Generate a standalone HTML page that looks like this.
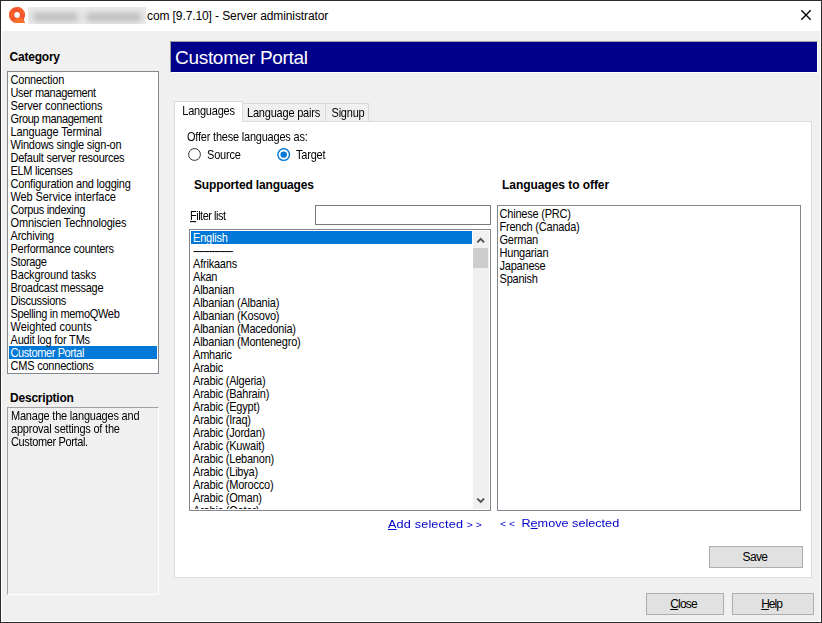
<!DOCTYPE html>
<html>
<head>
<meta charset="utf-8">
<title>Server administrator</title>
<style>
html,body{margin:0;padding:0;}
body{width:822px;height:623px;overflow:hidden;background:#2b2b2b;font-family:"Liberation Sans",sans-serif;font-size:11px;letter-spacing:-0.21px;color:#000;position:relative;}
.abs{position:absolute;}
#frame{left:1px;top:1px;width:820px;height:621px;background:#fff;}
#client{left:2px;top:31px;width:818px;height:590px;background:#f0f0f0;}
#title{left:147px;top:8px;font-size:12px;line-height:16px;white-space:nowrap;color:#000;letter-spacing:-0.1px;}
#blur{left:28px;top:7px;width:118px;height:17px;background:#ebebeb;overflow:hidden;}
#blur i{position:absolute;display:block;top:6px;height:8px;background:#b9b9b9;filter:blur(3px);}
.h{font-weight:bold;font-size:12px;line-height:14px;white-space:nowrap;}
.list{background:#fff;border:1px solid #828790;box-sizing:border-box;overflow:hidden;}
.list div{height:13px;line-height:13px;white-space:nowrap;padding-left:1.5px;transform:translateY(1px) scaleY(1.08);transform-origin:0 10.5px;}
.sel{color:#fff;}
#ll div{padding-left:2px;}
.list i{position:absolute;display:block;background:#0078d7;height:13px;}
#banner{left:170px;top:41px;width:648px;height:32px;box-sizing:border-box;background:#00008b;border:1px solid;border-color:#a0a0a0 #fff #fff #a0a0a0;}
#banner span{position:absolute;left:4px;top:5px;font-size:19px;line-height:22px;color:#fff;white-space:nowrap;letter-spacing:-0.3px;}
.tab{box-sizing:border-box;border:1px solid #d9d9d9;border-bottom:none;background:#f0f0f0;text-align:center;white-space:nowrap;line-height:13px;}
#panel{left:174px;top:121px;width:638px;height:457px;background:#fff;border:1px solid #dcdcdc;box-sizing:border-box;}
.btn{box-sizing:border-box;border:1px solid #adadad;background:#e1e1e1;text-align:center;font-size:12px;line-height:20px;}
.link{color:#0000c8;font-size:11.5px;letter-spacing:0.15px;transform-origin:0 0;transform:scaleX(1.10);white-space:nowrap;line-height:13px;}
u{text-decoration:underline;}
.ch{font-size:9.5px;letter-spacing:2.6px;position:relative;top:-0.5px;}
.t{transform:scaleY(1.08);transform-origin:0 10px;}
.tab span,.desc span{display:block;transform:scaleY(1.08);transform-origin:0 10px;height:13px;line-height:13px;}
.radio{width:13px;height:13px;box-sizing:border-box;border-radius:50%;border:1px solid #333;background:#fff;}
</style>
</head>
<body>
<div id="frame" class="abs"></div>
<div id="client" class="abs"></div>

<!-- title bar -->
<svg class="abs" style="left:8px;top:6px" width="18" height="18" viewBox="0 0 18 18">
  <defs><clipPath id="cq"><path d="M9 1 A8 8 0 1 0 9 17 L17 17 L15.6 13.5 A8 8 0 0 0 9 1 Z"/></clipPath></defs>
  <g clip-path="url(#cq)">
  <rect x="0" y="0" width="18" height="18" fill="#f3502f"/>
  <path d="M7 0 L18 0 L18 12 Z" fill="#f7652b"/>
  <path d="M0 5 L4 3 L8 8 L2 14 L0 12 Z" fill="#f65e2c"/>
  <path d="M4 17.5 L9 11.5 L13 11.5 L18 17.5 Z" fill="#f8702a"/>
  </g>
  <circle cx="9.1" cy="8.9" r="2.8" fill="#fff"/>
</svg>
<div id="blur" class="abs"><i style="left:5px;width:45px"></i><i style="left:58px;width:55px"></i></div>
<div id="title" class="abs">com [9.7.10] - Server administrator</div>
<svg class="abs" style="left:799px;top:9px" width="13" height="13" viewBox="0 0 13 13"><path d="M2.3 1.3 L11.7 10.7 M11.7 1.3 L2.3 10.7" stroke="#000" stroke-width="1.3" fill="none"/></svg>

<!-- left column -->
<div class="abs h" style="left:9.5px;top:50px;">Category</div>
<div class="abs list" style="left:7px;top:71px;width:152px;height:303px;padding:1px 1px 0 1px;">
<i style="left:1px;top:274px;width:148px"></i><div>Connection</div>
<div style="letter-spacing:-0.35px">User management</div>
<div style="letter-spacing:-0.13px">Server connections</div>
<div style="letter-spacing:-0.40px">Group management</div>
<div style="letter-spacing:-0.13px">Language Terminal</div>
<div>Windows single sign-on</div>
<div style="letter-spacing:-0.25px">Default server resources</div>
<div style="letter-spacing:-0.29px">ELM licenses</div>
<div>Configuration and logging</div>
<div style="letter-spacing:-0.10px">Web Service interface</div>
<div style="letter-spacing:-0.33px">Corpus indexing</div>
<div style="letter-spacing:-0.15px">Omniscien Technologies</div>
<div>Archiving</div>
<div style="letter-spacing:-0.25px">Performance counters</div>
<div style="letter-spacing:-0.36px">Storage</div>
<div style="letter-spacing:-0.12px">Background tasks</div>
<div style="letter-spacing:-0.26px">Broadcast message</div>
<div style="letter-spacing:-0.29px">Discussions</div>
<div style="letter-spacing:-0.32px">Spelling in memoQWeb</div>
<div style="letter-spacing:-0.04px">Weighted counts</div>
<div>Audit log for TMs</div>
<div class="sel" style="letter-spacing:-0.40px">Customer Portal</div>
<div>CMS connections</div>
</div>
<div class="abs h" style="left:10px;top:391px;">Description</div>
<div class="abs desc" style="left:7px;top:407px;width:152px;height:188px;box-sizing:border-box;border:1px solid;border-color:#a0a0a0 #fff #fff #a0a0a0;background:#f0f0f0;padding:2px 0 0 3px;line-height:13px;white-space:nowrap;" ><span>Manage the languages and</span><span>approval settings of the</span><span style="letter-spacing:-0.36px">Customer Portal.</span></div>

<!-- banner -->
<div id="banner" class="abs"><span>Customer Portal</span></div>

<!-- tabs -->
<div id="panel" class="abs"></div>
<div class="abs tab" style="left:241px;top:103px;width:85px;height:18px;padding-top:3px;"><span>Language pairs</span></div>
<div class="abs tab" style="left:325px;top:103px;width:44px;height:18px;padding-top:3px;padding-left:2px;"><span>Signup</span></div>
<div class="abs tab" style="left:174px;top:101px;width:69px;height:21px;padding-top:3px;background:#fff;"><span>Languages</span></div>

<!-- panel content -->
<div class="abs t" style="left:187px;top:131px;line-height:13px;white-space:nowrap;">Offer these languages as:</div>
<svg class="abs" style="left:188px;top:148px" width="13" height="13" viewBox="0 0 13 13"><circle cx="6.5" cy="6.5" r="5.9" fill="#fff" stroke="#333" stroke-width="1"/></svg>
<div class="abs t" style="left:207px;top:149px;line-height:13px;">Source</div>
<svg class="abs" style="left:277px;top:148px" width="14" height="14" viewBox="0 0 14 14"><circle cx="6.7" cy="6.6" r="5.8" fill="#fff" stroke="#0078d7" stroke-width="1.4"/><circle cx="6.7" cy="6.6" r="3.2" fill="#0078d7"/></svg>
<div class="abs t" style="left:296px;top:149px;line-height:13px;">Target</div>

<div class="abs h" style="left:194px;top:178px;letter-spacing:-0.15px;">Supported languages</div>
<div class="abs h" style="left:502px;top:178px;letter-spacing:-0.05px;">Languages to offer</div>

<div class="abs t" style="left:190px;top:210px;line-height:13px;white-space:nowrap;letter-spacing:-0.5px;"><u>F</u>ilter list</div>
<div class="abs" style="left:315px;top:205px;width:176px;height:20px;box-sizing:border-box;border:1px solid #7a7a7a;background:#fff;"></div>

<div class="abs list" id="ll" style="left:189px;top:229px;width:302px;height:282px;padding:1px 1px 0 1px;">
<i style="left:1px;top:1px;width:281px"></i><div class="sel">English</div><div style="letter-spacing:-1.04px">---------------</div><div>Afrikaans</div><div>Akan</div><div>Albanian</div><div>Albanian (Albania)</div><div>Albanian (Kosovo)</div><div>Albanian (Macedonia)</div><div>Albanian (Montenegro)</div><div>Amharic</div><div>Arabic</div><div>Arabic (Algeria)</div><div>Arabic (Bahrain)</div><div>Arabic (Egypt)</div><div>Arabic (Iraq)</div><div>Arabic (Jordan)</div><div>Arabic (Kuwait)</div><div>Arabic (Lebanon)</div><div>Arabic (Libya)</div><div>Arabic (Morocco)</div><div>Arabic (Oman)</div><div>Arabic (Qatar)</div>
</div>
<div class="abs" style="left:190px;top:509px;width:300px;height:1px;background:#fff;"></div>
<!-- scrollbar -->
<div class="abs" style="left:473px;top:231px;width:16px;height:278px;background:#f0f0f0;"></div>
<div class="abs" style="left:473px;top:248px;width:15px;height:20px;background:#cdcdcd;"></div>
<svg class="abs" style="left:472px;top:231px" width="17" height="17" viewBox="0 0 17 17"><path d="M5.3 11.3 L8.7 7.9 L12.1 11.3" stroke="#505050" stroke-width="1.9" fill="none"/></svg>
<svg class="abs" style="left:472px;top:493px" width="17" height="17" viewBox="0 0 17 17"><path d="M5.3 5.6 L8.7 9 L12.1 5.6" stroke="#505050" stroke-width="1.9" fill="none"/></svg>

<div class="abs list" style="left:497px;top:205px;width:304px;height:306px;padding:1px 1px 0 0px;">
<div>Chinese (PRC)</div><div>French (Canada)</div><div>German</div><div>Hungarian</div><div>Japanese</div><div>Spanish</div>
</div>

<div id="ladd" class="abs link" style="left:388px;top:518px;"><u>A</u>dd selected <span class="ch">&gt;&gt;</span></div>
<div id="lrem" class="abs link" style="left:500px;top:517px;letter-spacing:0px;"><span class="ch">&lt;&lt;</span> R<u>e</u>move selected</div>

<div class="abs btn" style="left:709px;top:546px;width:94px;height:22px;letter-spacing:-0.65px;padding-right:2px;">Save</div>
<div class="abs btn" style="left:646px;top:593px;width:78px;height:22px;letter-spacing:-0.8px;padding-right:3px;"><u>C</u>lose</div>
<div class="abs btn" style="left:732px;top:593px;width:82px;height:22px;letter-spacing:-1.0px;padding-right:3px;"><u>H</u>elp</div>
</body>
</html>
